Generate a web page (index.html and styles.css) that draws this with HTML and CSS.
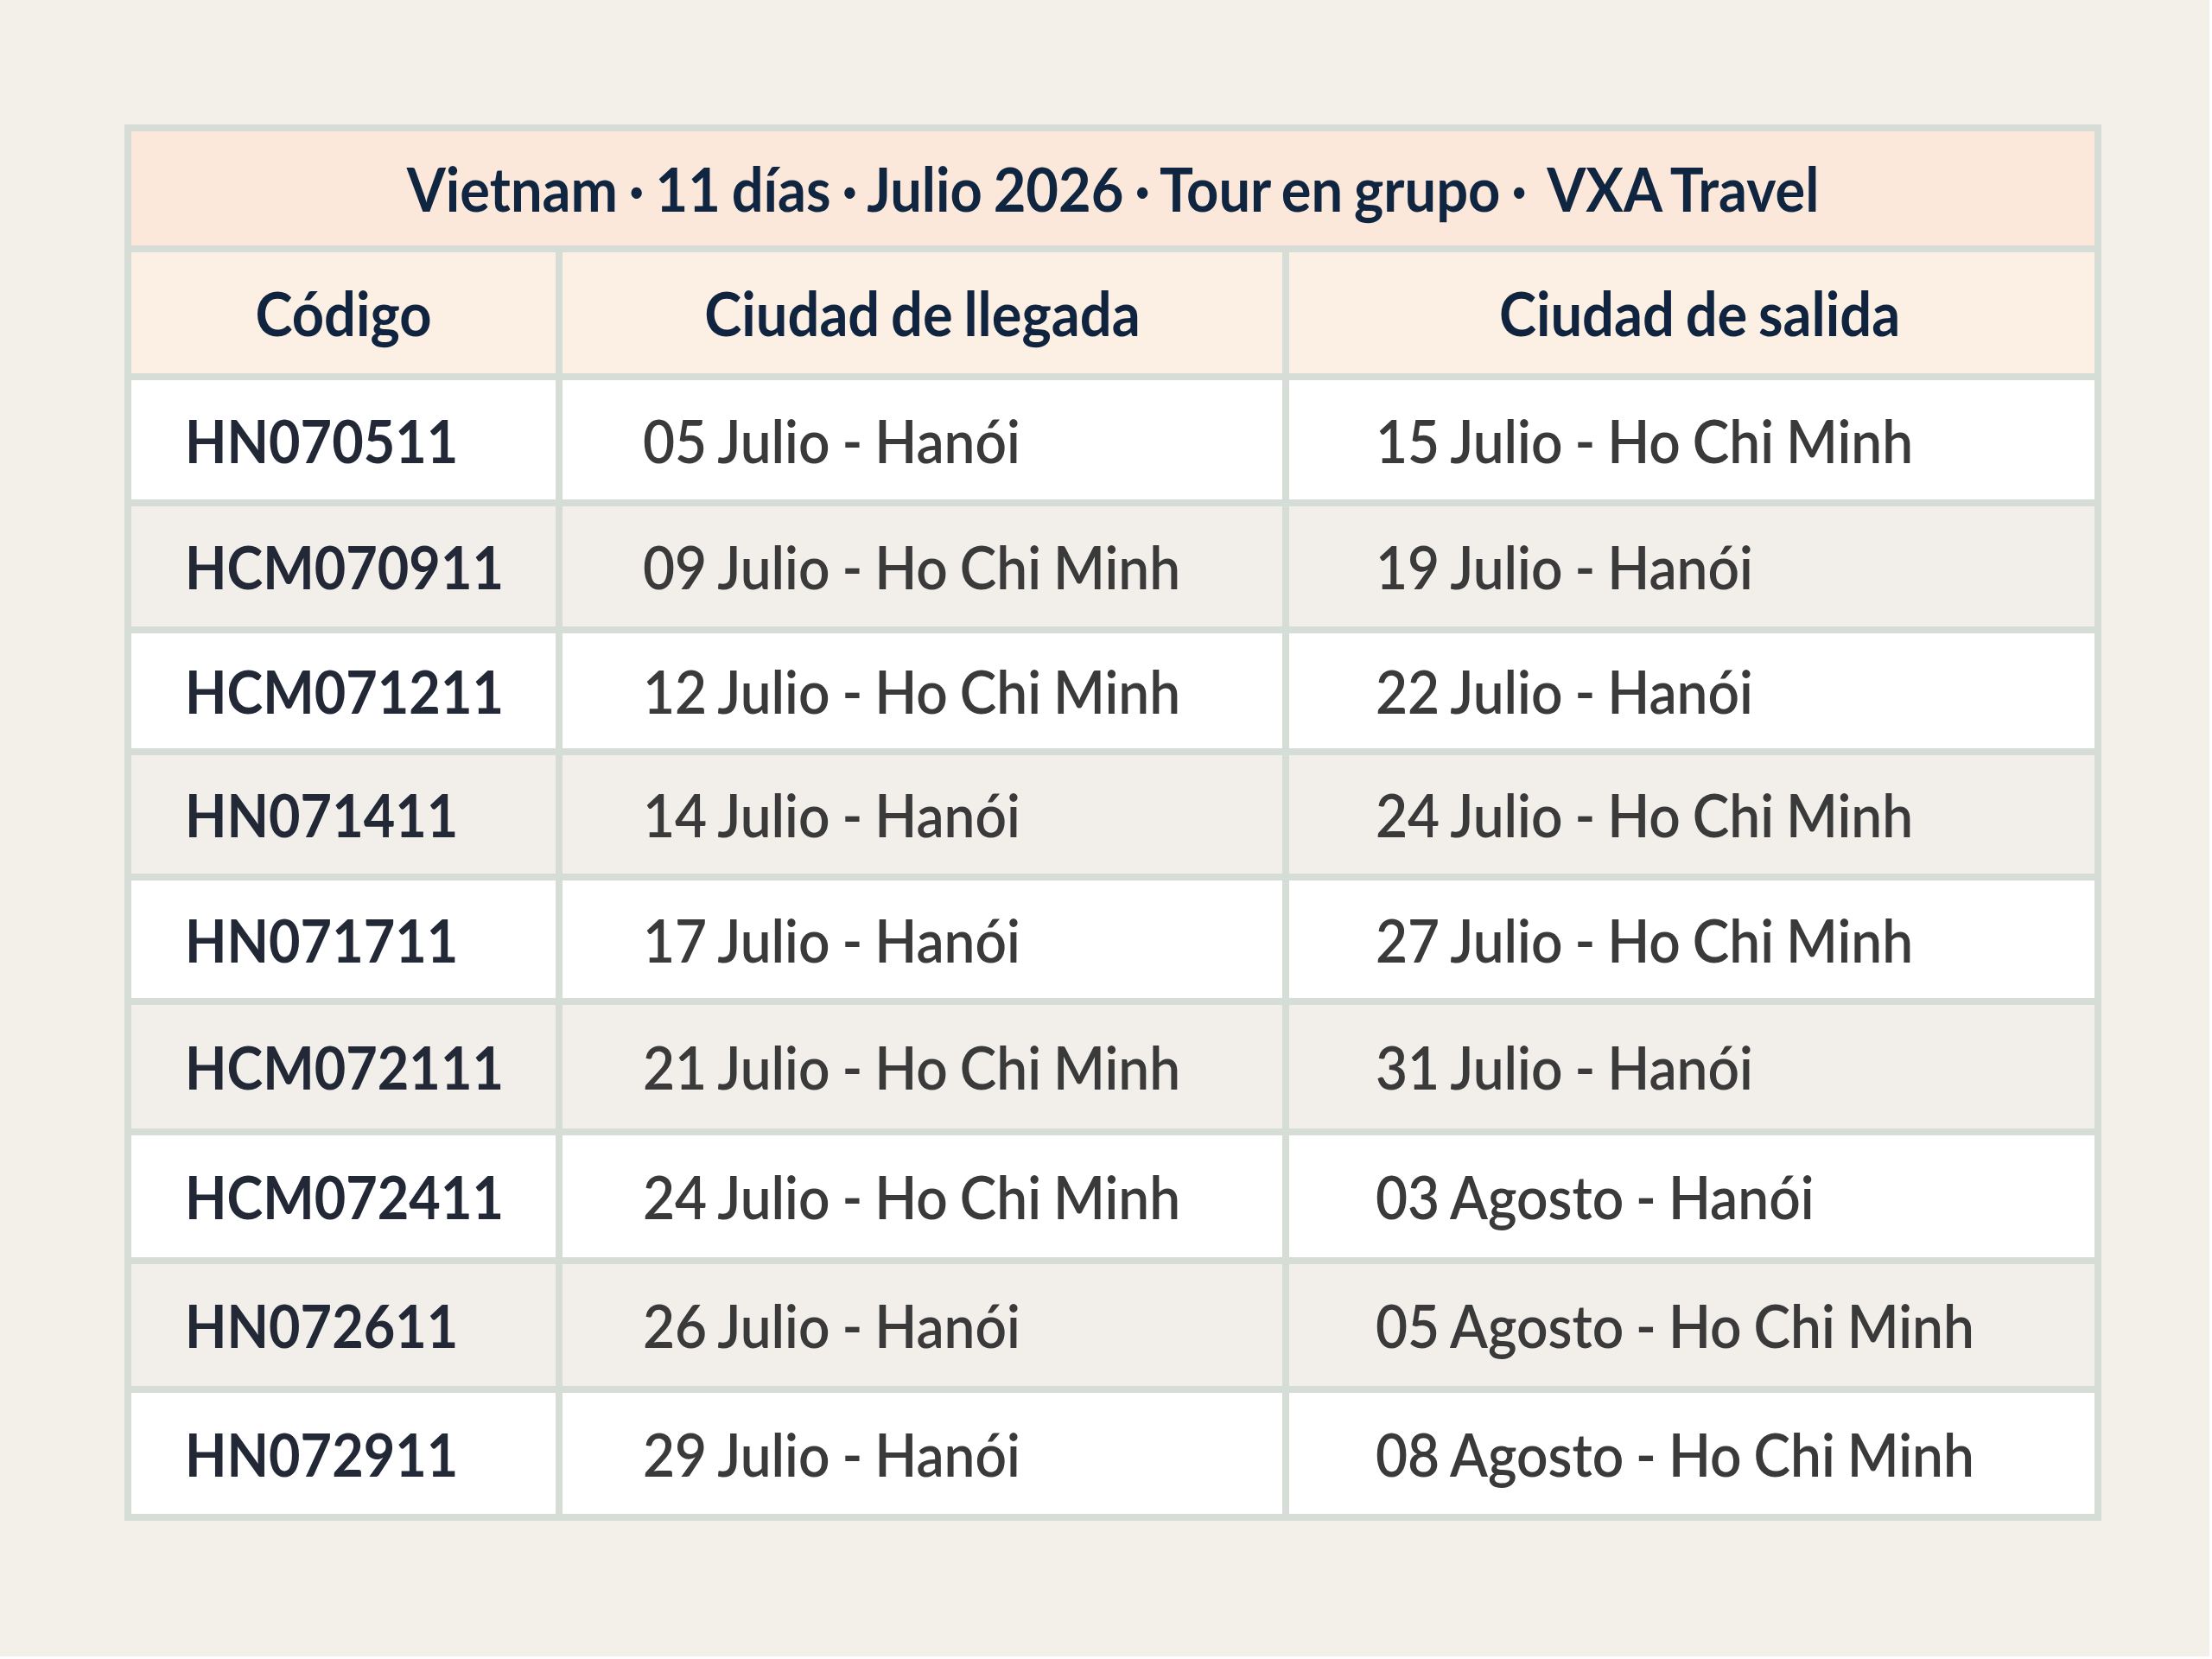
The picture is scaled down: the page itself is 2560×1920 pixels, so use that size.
FILE: index.html
```html
<!DOCTYPE html>
<html lang="es">
<head>
<meta charset="utf-8">
<title>Vietnam · 11 días · Julio 2026</title>
<link rel="stylesheet" href="styles.css">
</head>
<body>
<div class="page">
  <table class="tour">
    <colgroup>
      <col class="c-code">
      <col class="c-arr">
      <col class="c-dep">
    </colgroup>
    <thead>
      <tr class="title-row"><th colspan="3"><span class="txt">Vietnam · 11 días · Julio 2026 · Tour en grupo ·&nbsp; VXA Travel</span></th></tr>
      <tr class="head-row">
        <th><span class="txt">Código</span></th>
        <th><span class="txt">Ciudad de llegada</span></th>
        <th class="h-dep"><span class="txt">Ciudad de salida</span></th>
      </tr>
    </thead>
    <tbody>
      <tr><td class="code"><span class="txt">HN070511</span></td><td class="arr"><span class="txt">05 Julio - Hanói</span></td><td class="dep"><span class="txt">15 Julio - Ho Chi Minh</span></td></tr>
      <tr><td class="code"><span class="txt">HCM070911</span></td><td class="arr"><span class="txt">09 Julio - Ho Chi Minh</span></td><td class="dep"><span class="txt">19 Julio - Hanói</span></td></tr>
      <tr><td class="code"><span class="txt">HCM071211</span></td><td class="arr"><span class="txt">12 Julio - Ho Chi Minh</span></td><td class="dep"><span class="txt">22 Julio - Hanói</span></td></tr>
      <tr><td class="code"><span class="txt">HN071411</span></td><td class="arr"><span class="txt">14 Julio - Hanói</span></td><td class="dep"><span class="txt">24 Julio - Ho Chi Minh</span></td></tr>
      <tr><td class="code"><span class="txt">HN071711</span></td><td class="arr"><span class="txt">17 Julio - Hanói</span></td><td class="dep"><span class="txt">27 Julio - Ho Chi Minh</span></td></tr>
      <tr><td class="code"><span class="txt">HCM072111</span></td><td class="arr"><span class="txt">21 Julio - Ho Chi Minh</span></td><td class="dep"><span class="txt">31 Julio - Hanói</span></td></tr>
      <tr><td class="code"><span class="txt">HCM072411</span></td><td class="arr"><span class="txt">24 Julio - Ho Chi Minh</span></td><td class="dep"><span class="txt">03 Agosto - Hanói</span></td></tr>
      <tr><td class="code"><span class="txt">HN072611</span></td><td class="arr"><span class="txt">26 Julio - Hanói</span></td><td class="dep"><span class="txt">05 Agosto - Ho Chi Minh</span></td></tr>
      <tr><td class="code"><span class="txt">HN072911</span></td><td class="arr"><span class="txt">29 Julio - Hanói</span></td><td class="dep"><span class="txt">08 Agosto - Ho Chi Minh</span></td></tr>
    </tbody>
  </table>
</div>
</body>
</html>
```

FILE: styles.css
```css
html, body {
  margin: 0;
  padding: 0;
  background: #ffffff;
}

.page {
  width: 2557px;
  height: 1917px;
  box-sizing: border-box;
  padding: 144px 0 0 144px;
  background: #f3f0e9;
  font-family: Lato, "Liberation Sans", sans-serif;
}

.tour {
  border-collapse: separate;
  border-spacing: 8px;
  background: #d6dcd6;
  table-layout: fixed;
  width: 2288px;
}

.c-code { width: 491px; }
.c-arr { width: 833px; }
.c-dep { width: 932px; }

.tour th,
.tour td {
  padding: 0;
  vertical-align: middle;
}

.txt {
  display: inline-block;
  white-space: nowrap;
  transform: scaleY(1.08);
}

.title-row th {
  height: 132px;
  background: #fce8da;
  color: #0f2540;
  font-size: 65px;
  font-weight: 700;
  word-spacing: -3px;
  text-align: center;
}

.head-row th {
  height: 140px;
  background: #fcefe3;
  color: #10243f;
  font-size: 65px;
  font-weight: 700;
  word-spacing: -3px;
  text-align: center;
}

.head-row th.h-dep {
  padding-left: 18px;
}

.tour tbody td {
  height: 139px;
  background: #ffffff;
  font-size: 64px;
  word-spacing: -2px;
  text-align: left;
}

.tour tbody tr:nth-child(1) td { height: 138px; }
.tour tbody tr:nth-child(2) td { height: 139px; }
.tour tbody tr:nth-child(3) td { height: 133px; }
.tour tbody tr:nth-child(4) td { height: 137px; }
.tour tbody tr:nth-child(5) td { height: 136px; }
.tour tbody tr:nth-child(6) td { height: 143px; }
.tour tbody tr:nth-child(7) td { height: 141px; }
.tour tbody tr:nth-child(8) td { height: 141px; }
.tour tbody tr:nth-child(9) td { height: 140px; }

.tour tbody tr:nth-child(even) td {
  background: #f2efeb;
}

.tour td.code {
  padding-left: 62px;
  color: #222836;
  font-size: 63px;
  font-weight: 700;
}

.tour td.arr {
  padding-left: 93px;
  color: #3a3a3a;
  font-weight: 600;
}

.tour td.dep {
  padding-left: 100px;
  color: #3a3a3a;
  font-weight: 600;
}
```
